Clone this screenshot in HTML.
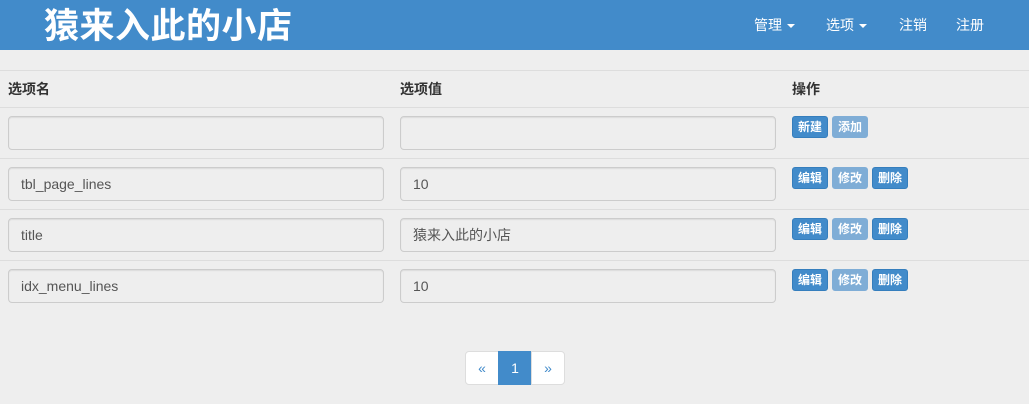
<!DOCTYPE html>
<html><head><meta charset="utf-8"><style>
*{box-sizing:border-box;margin:0;padding:0}
body{width:1029px;height:404px;background:#eee;font-family:"Liberation Sans","Noto Sans CJK SC",sans-serif;font-size:14px;color:#333;position:relative;overflow:hidden}
.nav{position:absolute;left:0;top:0;width:1029px;height:50px;background:#428bca}
.brand{position:absolute;left:44px;top:5px;color:#fff;font-size:35px;font-weight:bold;line-height:44px;letter-spacing:0.5px}
.ni{position:absolute;top:16px;color:#fff;font-size:14px;line-height:18px}
.caret{display:inline-block;width:0;height:0;border-left:4px solid transparent;border-right:4px solid transparent;border-top:4px solid #fff;vertical-align:middle;margin-left:5px}
.hl{position:absolute;left:0;width:1029px;height:1px;background:#ddd}
.th{position:absolute;top:80px;font-weight:bold;font-size:14px;line-height:18px}
.inp{position:absolute;height:34px;width:376px;border:1px solid #ccc;border-radius:4px;background:#eee;padding-left:12px;line-height:32px;color:#555;font-size:14px;box-shadow:inset 0 1px 1px rgba(0,0,0,.075)}
.b{position:absolute;height:22px;width:36px;border-radius:3px;color:#fff;font-size:12px;font-weight:bold;line-height:20px;text-align:center;background:#428bca;border:1px solid #357ebd}
.d{background:#7fadd6;border-color:#7fadd6}
.pg{position:absolute;top:351px;height:34px;border:1px solid #ddd;background:#fff;color:#428bca;text-align:center;line-height:32px;font-size:14px}
</style></head><body>
<div class="nav">
<div class="brand">猿来入此的小店</div>
<div class="ni" style="left:754px">管理<span class="caret"></span></div>
<div class="ni" style="left:826px">选项<span class="caret"></span></div>
<div class="ni" style="left:899px">注销</div>
<div class="ni" style="left:956px">注册</div>
</div>
<div class="hl" style="top:70px"></div>
<div class="th" style="left:8px">选项名</div>
<div class="th" style="left:400px">选项值</div>
<div class="th" style="left:792px">操作</div>
<div class="hl" style="top:107px"></div>
<div class="hl" style="top:158px"></div>
<div class="hl" style="top:209px"></div>
<div class="hl" style="top:260px"></div>

<div class="inp" style="left:8px;top:116px"></div>
<div class="inp" style="left:400px;top:116px"></div>
<div class="b" style="left:792px;top:116px">新建</div>
<div class="b d" style="left:832px;top:116px">添加</div>

<div class="inp" style="left:8px;top:167px">tbl_page_lines</div>
<div class="inp" style="left:400px;top:167px">10</div>
<div class="b" style="left:792px;top:167px">编辑</div>
<div class="b d" style="left:832px;top:167px">修改</div>
<div class="b" style="left:872px;top:167px">删除</div>

<div class="inp" style="left:8px;top:218px">title</div>
<div class="inp" style="left:400px;top:218px">猿来入此的小店</div>
<div class="b" style="left:792px;top:218px">编辑</div>
<div class="b d" style="left:832px;top:218px">修改</div>
<div class="b" style="left:872px;top:218px">删除</div>

<div class="inp" style="left:8px;top:269px">idx_menu_lines</div>
<div class="inp" style="left:400px;top:269px">10</div>
<div class="b" style="left:792px;top:269px">编辑</div>
<div class="b d" style="left:832px;top:269px">修改</div>
<div class="b" style="left:872px;top:269px">删除</div>

<div class="pg" style="left:465px;width:34px;border-radius:4px 0 0 4px">«</div>
<div class="pg" style="left:498px;width:34px;background:#428bca;border-color:#428bca;color:#fff">1</div>
<div class="pg" style="left:531px;width:34px;border-radius:0 4px 4px 0">»</div>
</body></html>
